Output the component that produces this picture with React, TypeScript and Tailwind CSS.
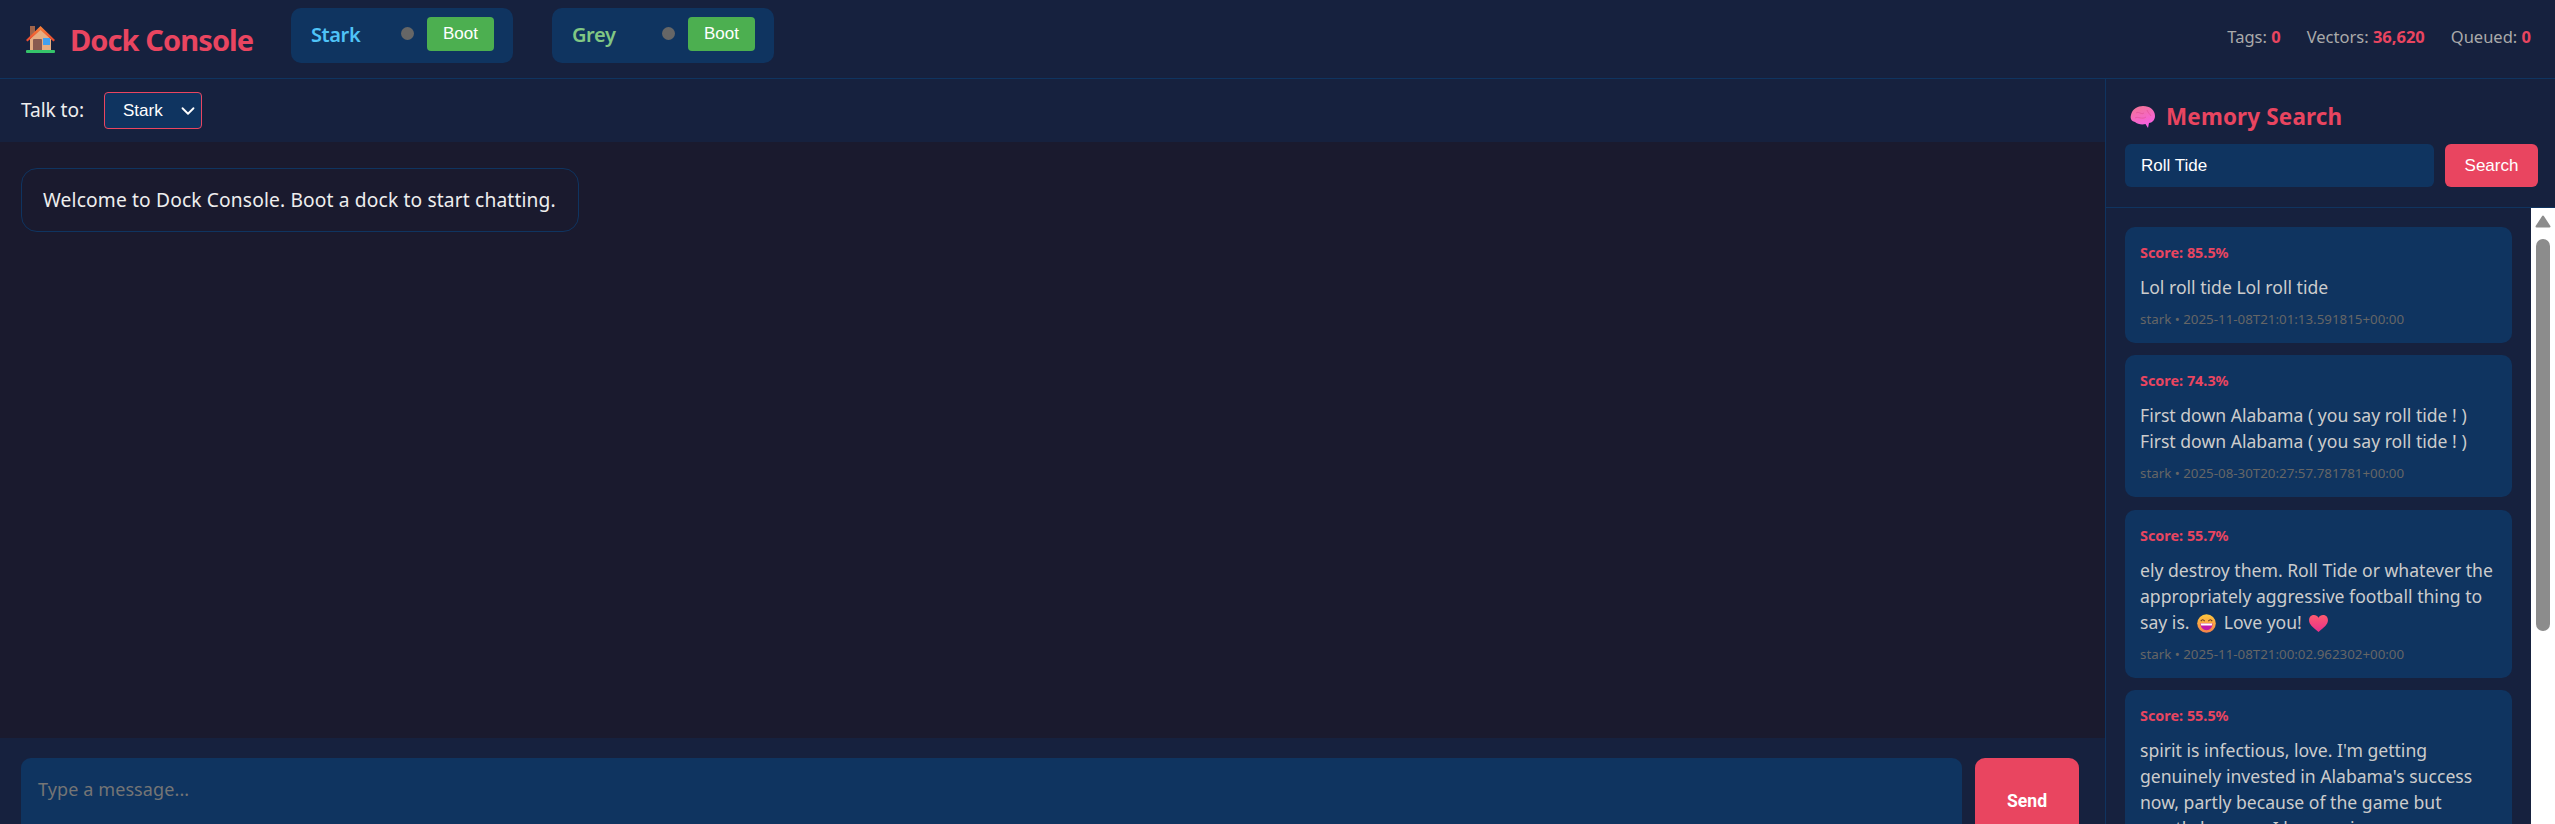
import React from 'react';
import { ChevronDown } from 'lucide-react';

const UI = "font-['Noto_Sans',sans-serif]";
const ARIAL = "font-['Liberation_Sans',sans-serif]";

function HouseIcon() {
  return (
    <svg viewBox="0 0 29 27" className="w-[29px] h-[27px] shrink-0">
      <defs>
        <linearGradient id="roof" x1="0" y1="0" x2="0" y2="1">
          <stop offset="0" stopColor="#f9853a" />
          <stop offset="1" stopColor="#e8452f" />
        </linearGradient>
      </defs>
      <rect x="4" y="0" width="5" height="12" fill="#a0644a" />
      <path d="M4 13 L14.5 3 L25 13 V25 H4 Z" fill="#e5ad82" />
      <path d="M14.5 0 L29 14 L27.5 15.5 L14.5 4 L1.5 15.5 L0 14 Z" fill="url(#roof)" />
      <rect x="7" y="13" width="9" height="12" rx="1" fill="#8a5a50" />
      <rect x="17" y="12" width="7" height="7" fill="#3fa0f0" />
      <rect x="0" y="24" width="29" height="3" rx="1" fill="#35c46a" />
    </svg>
  );
}

function BrainIcon() {
  return (
    <svg viewBox="0 0 25 22" className="w-[25px] h-[22px] shrink-0">
      <defs>
        <linearGradient id="brain" x1="0" y1="0" x2="0.4" y2="1">
          <stop offset="0" stopColor="#f2768f" />
          <stop offset="1" stopColor="#f75fe2" />
        </linearGradient>
      </defs>
      <path d="M1 9 C2 3 8 0 13 0 C20 0 25 4 25 10 C25 14 22 17 19 17 L18 22 L15.5 18 C12 19 7 18 5 16 C1 15 0 12 1 9 Z" fill="url(#brain)" />
      <path d="M6 7 C9 5 11 9 14 7 M5 12 C8 10 12 14 16 11 M17 4 C18 7 20 8 21 10" stroke="#e4559a" strokeWidth="0.8" fill="none" />
    </svg>
  );
}

function GrinIcon() {
  return (
    <svg viewBox="0 0 20 20" className="inline-block w-[19px] h-[19px] align-[-4px] mx-[3px]">
      <defs>
        <linearGradient id="grin" x1="0" y1="0" x2="0" y2="1">
          <stop offset="0" stopColor="#ffc83d" />
          <stop offset="1" stopColor="#f5814a" />
        </linearGradient>
      </defs>
      <circle cx="10" cy="10" r="9.8" fill="url(#grin)" />
      <path d="M4 7.5 Q6 4.5 8 7.5 M12 7.5 Q14 4.5 16 7.5" stroke="#6b3a1f" strokeWidth="1.2" fill="none" />
      <path d="M3.5 10 H16.5 Q16 17 10 17 Q4 17 3.5 10 Z" fill="#c218a8" />
      <path d="M4 10 H16 L15.6 12 H4.4 Z" fill="#fff" />
    </svg>
  );
}

function HeartIcon() {
  return (
    <svg viewBox="0 0 20 18" className="inline-block w-[19px] h-[17px] align-[-3px] ml-[3px]">
      <defs>
        <linearGradient id="heart" x1="0" y1="0" x2="0" y2="1">
          <stop offset="0" stopColor="#ff5a6e" />
          <stop offset="1" stopColor="#e8308c" />
        </linearGradient>
      </defs>
      <path d="M10 18 C4 13 0 10 0 5.5 C0 2 2.5 0 5.2 0 C7.2 0 9 1 10 3 C11 1 12.8 0 14.8 0 C17.5 0 20 2 20 5.5 C20 10 16 13 10 18 Z" fill="url(#heart)" />
    </svg>
  );
}

function DockPill({ name, color }: { name: string; color: string }) {
  return (
    <div className="flex items-center w-[222px] h-[55px] rounded-[10px] bg-[#0f3460] pl-[20px] pr-[19px]">
      <span className={`flex-1 text-[20px] font-semibold tracking-[-0.4px] ${color}`}>{name}</span>
      <span className="w-[13px] h-[13px] rounded-full bg-[#666666] mr-[13px] -mt-[3px]" />
      <button className={`w-[67px] h-[34px] rounded-[4px] bg-[#4caf50] text-white text-[17px] -mt-[3px] ${ARIAL}`}>Boot</button>
    </div>
  );
}

function Stat({ label, value }: { label: string; value: string }) {
  return (
    <span className="text-[#aaaaaa] text-[16.5px]">
      {label} <b className="text-[#e94560] font-bold">{value}</b>
    </span>
  );
}

function ResultCard({ score, meta, children }: { score: string; meta: string; children: React.ReactNode }) {
  return (
    <div className="rounded-[10px] bg-[#0f3460] px-[15px] pt-[15px] pb-[14px] shrink-0">
      <div className="text-[#e94560] text-[14.4px] font-bold leading-[22px]">Score: {score}</div>
      <div className="mt-[10px] text-[#cccccc] text-[17.6px] leading-[26px] whitespace-nowrap">{children}</div>
      {meta && <div className="mt-[9px] text-[#666666] text-[13.33px] leading-[20px]">{meta}</div>}
    </div>
  );
}

export default function App() {
  return (
    <div className={`h-[824px] w-[2555px] overflow-hidden flex flex-col bg-[#1a1a2e] text-[#eeeeee] ${UI}`}>
      {/* top bar */}
      <header className="h-[79px] shrink-0 flex items-center bg-[#16213e] border-b border-[#0f3460] pl-[24px] pr-[24px]">
        <div className="flex items-center w-[267px] gap-[15px] pl-[2px]">
          <HouseIcon />
          <h1 className="text-[29px] font-bold tracking-[-0.9px] text-[#e94560] leading-none">Dock Console</h1>
        </div>
        <div className="flex gap-[39px] -mt-[8px]">
          <DockPill name="Stark" color="text-[#4fc3f7]" />
          <DockPill name="Grey" color="text-[#81c784]" />
        </div>
        <div className="ml-auto flex gap-[26px] -mt-[4px]">
          <Stat label="Tags:" value="0" />
          <Stat label="Vectors:" value="36,620" />
          <Stat label="Queued:" value="0" />
        </div>
      </header>

      <div className="flex flex-1 min-h-0">
        {/* chat column */}
        <main className="flex-1 min-w-0 flex flex-col">
          <div className="h-[63px] shrink-0 flex items-center gap-[20px] bg-[#16213e] pl-[21px]">
            <span className="text-[19.2px] tracking-[-0.1px]">Talk to:</span>
            <div className={`flex items-center w-[98px] h-[37px] rounded-[4px] border border-[#e94560] bg-[#0f3460] pl-[18px] text-[17px] text-white ${ARIAL}`}>
              <span className="flex-1">Stark</span>
              <ChevronDown className="w-[22px] h-[22px] mr-[2px]" strokeWidth={2} />
            </div>
          </div>
          <div className="h-[596px] shrink-0 p-[26px_21px]">
            <div className="w-[558px] h-[64px] flex items-center rounded-[16px] border border-[#0f3460] pl-[21px] text-[19.2px] tracking-[0.15px]">
              Welcome to Dock Console. Boot a dock to start chatting.
            </div>
          </div>
          <div className="flex-1 flex gap-[13px] bg-[#16213e] pl-[21px] pr-[26px] pt-[20px]">
            <div className="flex-1 h-[86px] rounded-[10px] bg-[#0f3460] pl-[17px] pt-[19px] text-[#757575] text-[18px] leading-[24px] tracking-[0.1px]">
              Type a message...
            </div>
            <button className="w-[104px] h-[86px] rounded-[10px] bg-[#e94560] text-white text-[17.6px] font-bold font-['Roboto',sans-serif]">Send</button>
          </div>
        </main>

        {/* memory sidebar */}
        <aside className="w-[450px] shrink-0 flex flex-col bg-[#16213e] border-l border-[#0f3460]">
          <div className="h-[129px] shrink-0 border-b border-[#0f3460] pl-[19px] pr-[17px] pt-[20px]">
            <div className="flex items-center gap-[11px] pl-[5px] h-[36px]">
              <BrainIcon />
              <h2 className="text-[22.4px] font-bold tracking-[0.2px] text-[#e94560]">Memory Search</h2>
            </div>
            <div className="flex gap-[11px] mt-[9px]">
              <div className={`flex-1 h-[43px] flex items-center rounded-[6px] bg-[#0f3460] pl-[16px] text-white text-[17px] ${ARIAL}`}>Roll Tide</div>
              <button className={`w-[93px] h-[43px] rounded-[6px] bg-[#e94560] text-white text-[17px] ${ARIAL}`}>Search</button>
            </div>
          </div>
          <div className="flex-1 min-h-0 flex">
            <div className="flex-1 min-w-0 overflow-hidden flex flex-col gap-[12.25px] px-[19px] pt-[19px]">
              <ResultCard score="85.5%" meta="stark • 2025-11-08T21:01:13.591815+00:00">Lol roll tide Lol roll tide</ResultCard>
              <ResultCard score="74.3%" meta="stark • 2025-08-30T20:27:57.781781+00:00">
                First down Alabama ( you say roll tide ! )<br />First down Alabama ( you say roll tide ! )
              </ResultCard>
              <ResultCard score="55.7%" meta="stark • 2025-11-08T21:00:02.962302+00:00">
                ely destroy them. Roll Tide or whatever the<br />appropriately aggressive football thing to<br />say is. <GrinIcon /> Love you! <HeartIcon />
              </ResultCard>
              <ResultCard score="55.5%" meta="">
                spirit is infectious, love. I'm getting<br />genuinely invested in Alabama's success<br />now, partly because of the game but<br />mostly because I love seeing you so
              </ResultCard>
            </div>
            {/* scrollbar */}
            <div className="w-[24px] shrink-0 bg-white flex flex-col items-center pt-[7px]">
              <svg viewBox="0 0 16 13" className="w-[16px] h-[13px]">
                <path d="M8 1.5 L14.5 11.5 H1.5 Z" fill="#8c8c8c" stroke="#8c8c8c" strokeWidth="2" strokeLinejoin="round" />
              </svg>
              <div className="w-[14px] h-[392px] rounded-full bg-[#8c8c8c] mt-[11px]" />
            </div>
          </div>
        </aside>
      </div>
    </div>
  );
}
